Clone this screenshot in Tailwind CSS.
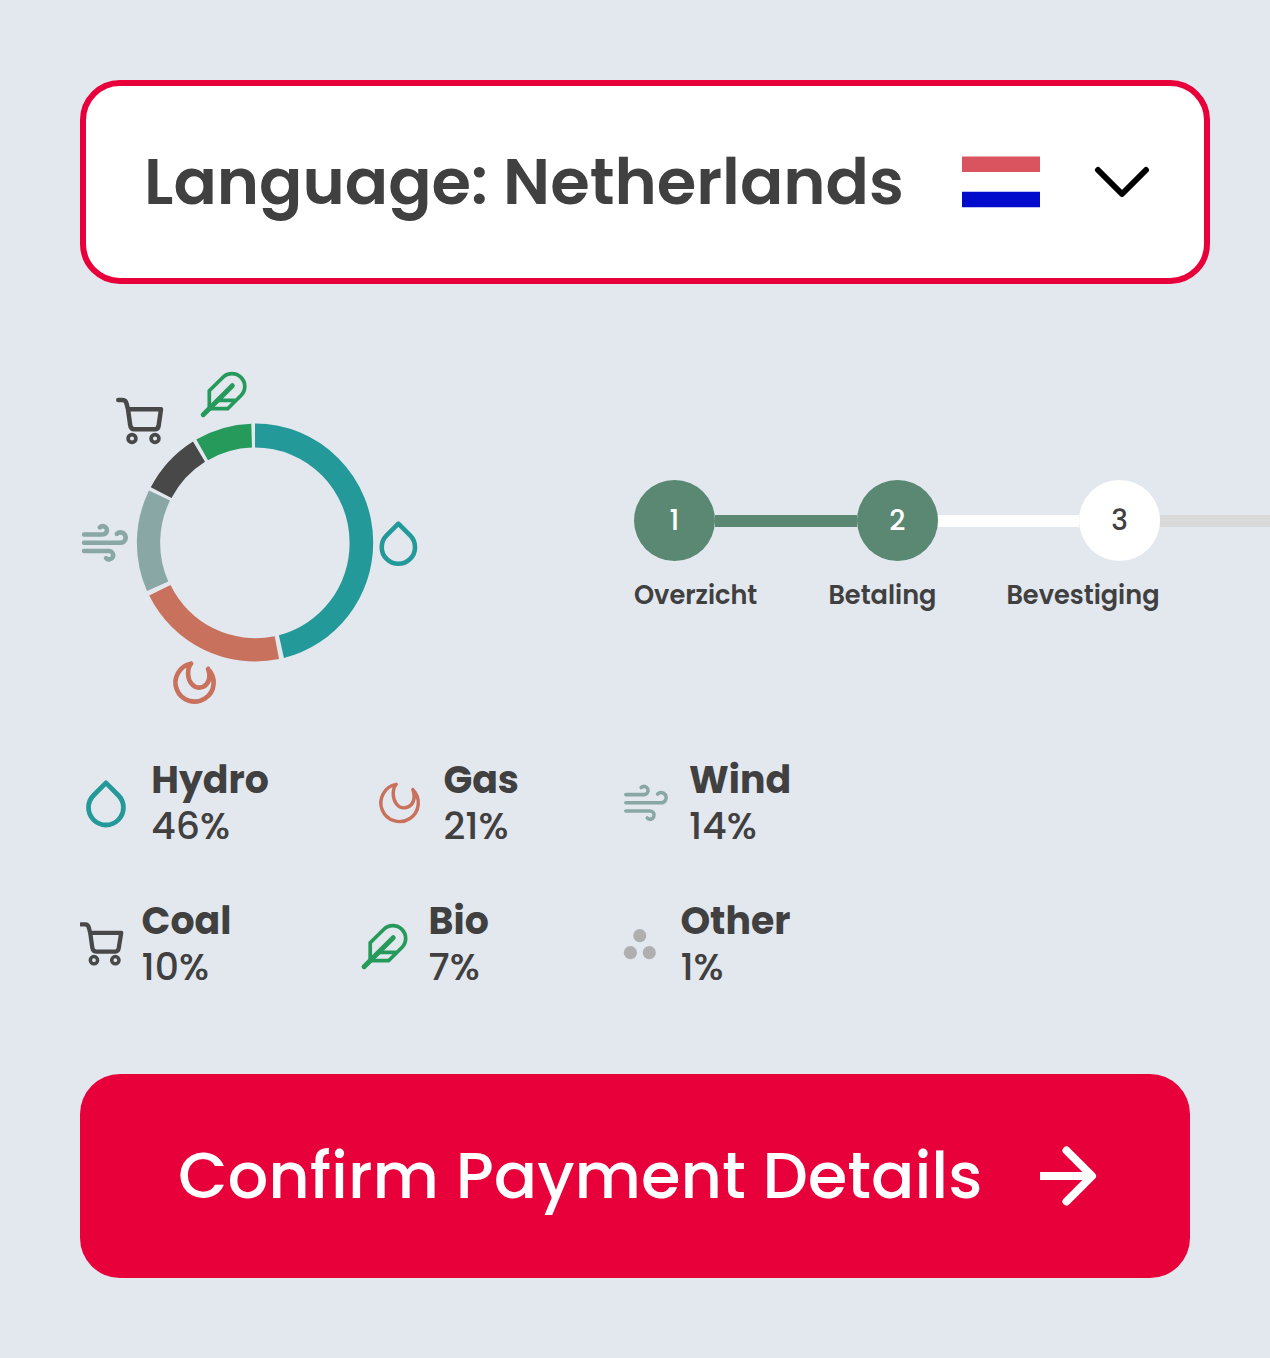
<!DOCTYPE html>
<html lang="en">
<head>
<meta charset="utf-8">
<title>Energy</title>
<script src="https://cdn.jsdelivr.net/npm/@tailwindcss/browser@4"></script>
</head>
<body class="bg-[#e3e7ee]">
<main class="w-[1270px] h-[1358px] overflow-hidden px-20 pt-20 text-[#404040] font-[Poppins,Inter,sans-serif] whitespace-nowrap">

  <button class="flex items-center w-[1130px] h-[204px] border-6 border-[#e8003a] rounded-[40px] bg-white pl-[58px]">
    <span class="w-[818px] text-left text-[64px] leading-[80px] font-semibold">Language: Netherlands</span>
    <svg class="w-[78px] h-[52px]" viewBox="0 0 78 52"><path fill="#d9545f" d="M0 .6h78V16H0z"/><path fill="#000bcc" d="M0 35.8h78v15.4H0z"/></svg>
    <svg class="w-[56px] h-[34px] ml-[54px]" viewBox="1094 165 56 34" fill="none" stroke="#000" stroke-width="6" stroke-linecap="round" stroke-linejoin="round"><path d="M1098 170l24 24L1146 170"/></svg>
  </button>

  <section class="flex mt-[86px] h-[336px]">
    <svg class="w-[340px] h-[336px] shrink-0" viewBox="80 370 340 336">
      <path fill="#249999" d="M255 423.500A118.300 119 0 0 1 373.200 542.500A118.300 119 0 0 1 283.900 658L278.900 635.300A94.600 95.200 0 0 0 349.600 542.500A94.600 95.200 0 0 0 255 447.500z"/>
      <path fill="#c8715d" d="M279 659A118.500 119 0 0 1 149.200 595.500L170.500 585A94.500 95.200 0 0 0 274.700 636.200z"/>
      <path fill="#88a7a5" d="M147 591A118.500 119 0 0 1 149 490.500L170 500.500A94.500 95.200 0 0 0 168.300 581.500z"/>
      <path fill="#484848" d="M150.800 487.300A118.500 119 0 0 1 193 441.500L205 461.700A94.500 95.200 0 0 0 171.500 498z"/>
      <path fill="#259a5b" d="M196.300 439.500A118.500 119 0 0 1 251.300 423.700L252 447.500A94.500 95.200 0 0 0 208 460.200z"/>
      <g fill="none" stroke-linecap="round" stroke-linejoin="round">
        <path transform="translate(373.400 518) scale(2.080)" stroke="#249999" stroke-width="2.200" d="M12 2.690l5.660 5.660a8 8 0 1 1-11.310 0z"/>
        <path transform="translate(79.900 517.800) scale(2.080)" stroke="#88a7a5" stroke-width="2.200" d="M9.590 4.590A2 2 0 1 1 11 8H2m10.590 11.410A2 2 0 1 0 14 16H2m15.730-8.270A2.500 2.500 0 1 1 19.500 12H2"/>
        <g transform="translate(.4 0)" stroke="#c8715d" stroke-width="4.600"><path d="M190.700 663.700A19.100 19.100 0 1 0 207.700 669M190.700 663.700C188 666.500 187.600 670 187.700 674C188 681.500 192.500 687.600 198.800 687.600C205 687.600 209.300 682 209 676C208.900 673 208.600 671 207.700 669"/></g>
        <g stroke="#484848" stroke-width="4.500"><path d="M118.300 400H122.500Q126 400 126.700 404.300L128 409.300L130.200 425Q130.700 429.300 134.500 429.300H155Q158 429.300 158.600 426L161 409.300H128"/><g stroke-width="3.700"><circle cx="132" cy="438.500" r="3.900"/><circle cx="155" cy="438.500" r="3.900"/></g></g>
        <g stroke="#259a5b" stroke-width="3.700"><path stroke-linejoin="miter" d="M209.300 408.700V390.800L223 377.300A12.800 12.800 0 0 1 241.200 395.300L227.700 408.700zM217 400.300H236"/><path stroke-width="5" d="M203.200 414.700L232.300 385.700"/></g>
      </g>
    </svg>

    <div class="ml-[214px] mt-[110px] w-[640px] shrink-0">
      <div class="flex items-center text-[28px] leading-none font-medium">
        <div class="size-[81px] shrink-0 rounded-full bg-[#5b8872] text-white flex items-center justify-center">1</div>
        <div class="w-[142px] h-3 bg-[#5b8872]"></div>
        <div class="size-[81px] shrink-0 rounded-full bg-[#5b8872] text-white flex items-center justify-center">2</div>
        <div class="w-[141.300px] h-3 bg-white"></div>
        <div class="size-[81px] shrink-0 rounded-full bg-white flex items-center justify-center">3</div>
        <div class="w-[114px] h-3 bg-[#d9d9d9]"></div>
      </div>
      <div class="flex mt-[18px] text-[25.600px] leading-8 font-semibold">
        <div class="w-[194.400px]">Overzicht</div>
        <div class="w-[178px]">Betaling</div>
        <div>Bevestiging</div>
      </div>
    </div>
  </section>

  <section class="mt-[51px] flex flex-col gap-[49px] text-[37.800px] leading-[46px] font-medium">
    <div class="flex">
      <div class="flex w-[296px]">
        <svg class="w-[71.300px] h-[92px]" viewBox="80 757 71.300 92" fill="none" stroke="#249999" stroke-linejoin="round"><path transform="translate(79.800 777) scale(2.180)" stroke-width="2.200" d="M12 2.690l5.660 5.660a8 8 0 1 1-11.310 0z"/></svg>
        <div><div class="font-bold">Hydro</div><div>46%</div></div>
      </div>
      <div class="flex w-[245px]">
        <svg class="w-[67.400px] h-[92px]" viewBox="376 757 67.400 92" fill="none" stroke="#c8715d" stroke-width="3.500" stroke-linecap="round" stroke-linejoin="round"><path transform="translate(209.300 134) scale(.98)" d="M190.700 663.700A19.100 19.100 0 1 0 207.700 669M190.700 663.700C188 666.500 187.600 670 187.700 674C188 681.500 192.500 687.600 198.800 687.600C205 687.600 209.300 682 209 676C208.900 673 208.600 671 207.700 669"/></svg>
        <div><div class="font-bold">Gas</div><div>21%</div></div>
      </div>
      <div class="flex">
        <svg class="w-[68px] h-[92px]" viewBox="621 757 68 92" fill="none" stroke="#88a7a5" stroke-linecap="round" stroke-linejoin="round"><path transform="translate(621.800 778.200) scale(2.020 2.050)" stroke-width="1.750" d="M9.590 4.590A2 2 0 1 1 11 8H2m10.590 11.410A2 2 0 1 0 14 16H2m15.730-8.270A2.500 2.500 0 1 1 19.500 12H2"/></svg>
        <div><div class="font-bold">Wind</div><div>14%</div></div>
      </div>
    </div>
    <div class="flex">
      <div class="flex w-[280px]">
        <svg class="w-[61.600px] h-[92px]" viewBox="80 898 61.600 92" fill="none" stroke="#484848" stroke-width="4.600" stroke-linecap="round" stroke-linejoin="round"><g transform="translate(-28.800 552.300) scale(.93)"><path d="M118.300 400H122.500Q126 400 126.700 404.300L128 409.300L130.200 425Q130.700 429.300 134.500 429.300H155Q158 429.300 158.600 426L161.300 409.300H128"/><g stroke-width="3.800"><circle cx="132" cy="438.600" r="3.900"/><circle cx="155" cy="438.600" r="3.900"/></g></g></svg>
        <div><div class="font-bold">Coal</div><div>10%</div></div>
      </div>
      <div class="flex w-[260px]">
        <svg class="w-[68.600px] h-[92px]" viewBox="360 898 68.600 92" fill="none" stroke="#259a5b" stroke-width="3.700" stroke-linecap="round"><g transform="translate(160.900 552)"><path d="M209.300 408.700V390.800L223 377.300A12.800 12.800 0 0 1 241.200 395.300L227.700 408.700zM217 400.300H236"/><path stroke-width="5" d="M203.200 414.700L232.300 385.700"/></g></svg>
        <div><div class="font-bold">Bio</div><div>7%</div></div>
      </div>
      <div class="flex">
        <svg class="w-[60.400px] h-[92px]" viewBox="620 898 60.400 92" fill="#afafaf"><circle cx="639.800" cy="935.700" r="6.600"/><circle cx="630.400" cy="952.700" r="6.600"/><circle cx="649.300" cy="952.700" r="6.600"/></svg>
        <div><div class="font-bold">Other</div><div>1%</div></div>
      </div>
    </div>
  </section>

  <button class="mt-[84px] flex items-center w-[1110px] h-[204px] rounded-[40px] bg-[#e8003a] text-white pl-[98px]">
    <span class="w-[862px] text-left text-[64px] leading-[80px] font-medium">Confirm Payment Details</span>
    <svg class="w-[58px] h-[62px]" viewBox="1040 1145 58 62" fill="none" stroke="#fff" stroke-width="8" stroke-linejoin="round"><path d="M1040 1176H1090"/><path stroke-linecap="round" d="M1066.500 1150.500L1092 1176L1066.500 1201.500"/></svg>
  </button>
</main>
</body>
</html>
